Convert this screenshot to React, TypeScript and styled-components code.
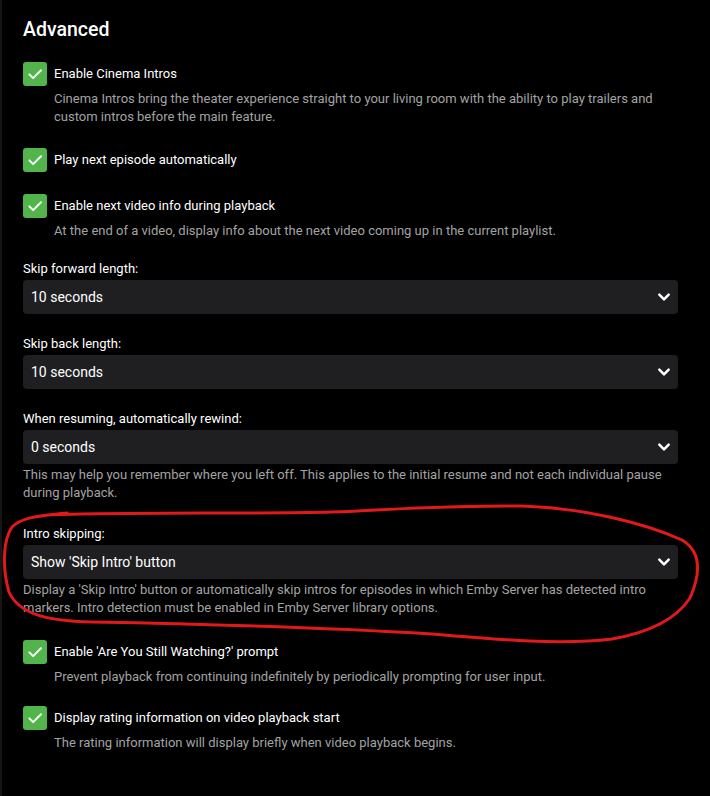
import React from "react";
import styled, { createGlobalStyle } from "styled-components";

const Global = createGlobalStyle`
  html, body { margin: 0; padding: 0; background: #000; }
  body { font-family: Roboto, "Noto Sans", "Liberation Sans", sans-serif; color: #fff; }
  * { box-sizing: border-box; }
`;

const Page = styled.div`
  position: relative;
  width: 710px;
  height: 796px;
  background: #000;
  border-left: 2px solid #161616;
  padding: 16px 32px 0 21px;
  overflow: hidden;
`;

const Heading = styled.h2`
  margin: 0 0 18px;
  font-size: 19.5px;
  font-weight: 500;
  line-height: 28px;
  color: #fff;
`;

const List = styled.div`
  display: flex;
  flex-direction: column;
  gap: 22px;
`;

const CheckItem = styled.div<{ $offset?: number }>`
  display: flex;
  flex-direction: column;
  margin-top: ${(p) => p.$offset ?? 0}px;
`;

const CheckRow = styled.label`
  display: flex;
  align-items: center;
  gap: 7px;
  font-size: 13px;
  line-height: 24px;
  color: #fff;
`;

const Box = styled.span`
  width: 24px;
  height: 24px;
  border-radius: 3px;
  background: #52b54b;
  display: flex;
  align-items: center;
  justify-content: center;
  flex-shrink: 0;
`;

const Desc = styled.div<{ $indent?: boolean }>`
  font-size: 13px;
  line-height: 18px;
  color: #a3a3a3;
  margin-top: ${(p) => (p.$indent ? "4px" : "2px")};
  padding-left: ${(p) => (p.$indent ? "31px" : "0")};
`;

const Field = styled.div<{ $offset?: number }>`
  display: flex;
  flex-direction: column;
  margin-top: ${(p) => p.$offset ?? 0}px;
`;

const FieldLabel = styled.div`
  font-size: 13px;
  line-height: 20px;
  color: #fff;
  margin-bottom: 1px;
`;

const Select = styled.div`
  height: 34px;
  border-radius: 4px;
  background: #1f1f21;
  display: flex;
  align-items: center;
  justify-content: space-between;
  padding: 0 6px 0 8px;
  font-size: 14px;
  color: #fff;
`;

const Annotation = styled.svg`
  position: absolute;
  left: 0;
  top: 0;
  pointer-events: none;
`;

const Check = () => (
  <Box>
    <svg width="18" height="18" viewBox="0 0 24 24" fill="none">
      <path d="M4.5 12.5l5 5L20 7" stroke="#fff" strokeWidth="2.6" strokeLinecap="round" strokeLinejoin="round" />
    </svg>
  </Box>
);

const Chevron = () => (
  <svg width="16" height="16" viewBox="0 0 24 24" fill="none">
    <path d="M5 8.5l7 7 7-7" stroke="#fff" strokeWidth="3.8" strokeLinecap="round" strokeLinejoin="round" />
  </svg>
);

const CheckSetting = ({ label, desc, offset }: { label: string; desc?: string; offset?: number }) => (
  <CheckItem $offset={offset}>
    <CheckRow>
      <Check />
      {label}
    </CheckRow>
    {desc && <Desc $indent>{desc}</Desc>}
  </CheckItem>
);

const SelectSetting = ({
  label,
  value,
  desc,
  offset,
}: {
  label: string;
  value: string;
  desc?: string;
  offset?: number;
}) => (
  <Field $offset={offset}>
    <FieldLabel>{label}</FieldLabel>
    <Select>
      {value}
      <Chevron />
    </Select>
    {desc && <Desc>{desc}</Desc>}
  </Field>
);

export default function App() {
  return (
    <>
      <Global />
      <Page>
        <Heading>Advanced</Heading>
        <List>
          <CheckSetting
            label="Enable Cinema Intros"
            desc="Cinema Intros bring the theater experience straight to your living room with the ability to play trailers and custom intros before the main feature."
          />
          <CheckSetting label="Play next episode automatically" />
          <CheckSetting
            label="Enable next video info during playback"
            desc="At the end of a video, display info about the next video coming up in the current playlist."
          />
          <SelectSetting label="Skip forward length:" value="10 seconds" offset={-3} />
          <SelectSetting label="Skip back length:" value="10 seconds" offset={-2} />
          <SelectSetting
            label="When resuming, automatically rewind:"
            value="0 seconds"
            offset={-2}
            desc="This may help you remember where you left off. This applies to the initial resume and not each individual pause during playback."
          />
          <SelectSetting
            label="Intro skipping:"
            value="Show 'Skip Intro' button"
            offset={0}
            desc="Display a 'Skip Intro' button or automatically skip intros for episodes in which Emby Server has detected intro markers. Intro detection must be enabled in Emby Server library options."
          />
          <CheckSetting
            label="Enable 'Are You Still Watching?' prompt"
            offset={1}
            desc="Prevent playback from continuing indefinitely by periodically prompting for user input."
          />
          <CheckSetting
            label="Display rating information on video playback start"
            offset={-2}
            desc="The rating information will display briefly when video playback begins."
          />
        </List>
        <Annotation width="710" height="796" viewBox="0 0 710 796">
          <path
            d="M45 515 C 120 512, 250 514, 330 512 C 400 509, 450 505, 520 506 C 580 508, 640 522, 680 540 C 700 552, 698 575, 688 598 C 675 618, 650 632, 610 639 C 560 645, 500 640, 430 634 C 330 628, 200 624, 90 622 C 40 621, 16 612, 7 592 C 0 568, 1 540, 10 527 C 18 519, 30 516, 65 513"
            stroke="#e2191b"
            strokeWidth="3"
            fill="none"
            strokeLinecap="round"
          />
        </Annotation>
      </Page>
    </>
  );
}
